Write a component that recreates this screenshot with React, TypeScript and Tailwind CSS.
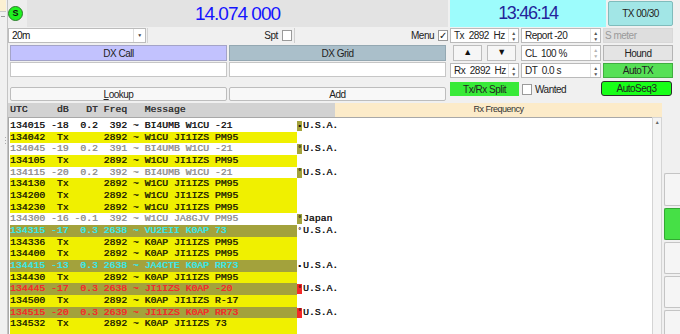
import React from "react";

type Kind = "tx" | "new" | "old" | "cq" | "me";

type Row = {
  text: string;
  kind: Kind;
  mark?: string;
  markBg?: string;
  country?: string;
};

const rows: Row[] = [
  { text: "134015 -18  0.2  392 ~ BI4UMB W1CU -21", kind: "new", mark: "•", markBg: "bg-[#a3a23c]", country: "U.S.A." },
  { text: "134042  Tx      2892 ~ W1CU JI1IZS PM95", kind: "tx" },
  { text: "134045 -19  0.2  391 ~ BI4UMB W1CU -21", kind: "old", mark: "°", markBg: "bg-[#a3a23c]", country: "U.S.A." },
  { text: "134105  Tx      2892 ~ W1CU JI1IZS PM95", kind: "tx" },
  { text: "134115 -20  0.2  392 ~ BI4UMB W1CU -21", kind: "old", mark: "°", markBg: "bg-[#a3a23c]", country: "U.S.A." },
  { text: "134130  Tx      2892 ~ W1CU JI1IZS PM95", kind: "tx" },
  { text: "134200  Tx      2892 ~ W1CU JI1IZS PM95", kind: "tx" },
  { text: "134230  Tx      2892 ~ W1CU JI1IZS PM95", kind: "tx" },
  { text: "134300 -16 -0.1  392 ~ W1CU JA8GJV PM95", kind: "old", mark: "°", markBg: "bg-[#a3a23c]", country: "Japan" },
  { text: "134315 -17  0.3 2638 ~ VU2EII K0AP 73", kind: "cq", mark: "°", country: "U.S.A." },
  { text: "134336  Tx      2892 ~ K0AP JI1IZS PM95", kind: "tx" },
  { text: "134400  Tx      2892 ~ K0AP JI1IZS PM95", kind: "tx" },
  { text: "134415 -13  0.3 2638 ~ JA4CTE K0AP RR73", kind: "cq", mark: "•", country: "U.S.A." },
  { text: "134430  Tx      2892 ~ K0AP JI1IZS PM95", kind: "tx" },
  { text: "134445 -17  0.3 2638 ~ JI1IZS K0AP -20", kind: "me", mark: "°", markBg: "bg-[#f42a2a]", country: "U.S.A." },
  { text: "134500  Tx      2892 ~ K0AP JI1IZS R-17", kind: "tx" },
  { text: "134515 -20  0.3 2639 ~ JI1IZS K0AP RR73", kind: "me", mark: "°", markBg: "bg-[#f42a2a]", country: "U.S.A." },
  { text: "134532  Tx      2892 ~ K0AP JI1IZS 73", kind: "tx" },
];

const rowStyle: Record<Kind, string> = {
  tx: "bg-[#f0f000] text-[#2a2a00]",
  new: "text-[#1c1c1c]",
  old: "text-[#929292]",
  cq: "bg-[#a3a23c] text-[#3ae6e6]",
  me: "bg-[#a3a23c] text-[#f42a2a]",
};

const ui = "font-['Liberation_Sans',Arial,sans-serif] tracking-[-0.5px]";
const mono =
  "font-['Liberation_Mono','Courier_New',monospace] tracking-normal [text-shadow:0.35px_0_0_currentColor]";

function SpinArrows({ dim }: { dim?: boolean }) {
  return (
    <div
      className={`flex h-full w-[10px] shrink-0 flex-col items-center justify-center border-l border-[#e4e4e4] text-[5px] leading-[6px] ${
        dim ? "text-[#b4b4b4]" : "text-[#555]"
      }`}
    >
      <span>▲</span>
      <span>▼</span>
    </div>
  );
}

function Spin({ children, dim }: { children: React.ReactNode; dim?: boolean }) {
  return (
    <div className="flex h-full items-center border border-[#bababa] bg-white">
      <div className="flex flex-1 items-center overflow-hidden whitespace-pre pl-[3px] text-[#222]">{children}</div>
      <SpinArrows dim={dim} />
    </div>
  );
}

function Check({ checked }: { checked?: boolean }) {
  return (
    <div className="flex h-[11px] w-[10px] shrink-0 items-center justify-center border border-[#9a9a9a] bg-white text-[10px] leading-none text-[#111]">
      {checked ? "✓" : ""}
    </div>
  );
}

export default function App() {
  return (
    <div className={`flex h-[334px] w-[680px] overflow-hidden bg-[#f0f0f0] text-[10px] ${ui}`}>
      {/* left splitter strip */}
      <div className="flex w-[8px] shrink-0 flex-col border-r border-[#c4c4c4]">
        <div className="h-[12px] w-[6px] border-b border-[#c8c8c8] bg-[#fbf0d2]" />
        <div className="ml-[1px] mt-[4px] h-[1px] w-[4px] bg-[#999]" />
        <div className="ml-[5px] mt-[120px] flex flex-col gap-[2px]">
          <span className="h-[1px] w-[1px] bg-[#aaa]" />
          <span className="h-[1px] w-[1px] bg-[#aaa]" />
          <span className="h-[1px] w-[1px] bg-[#aaa]" />
        </div>
      </div>

      <div className="flex h-full w-[672px] flex-col">
        {/* top controls */}
        <div className="flex h-[103px] shrink-0">
          {/* left block */}
          <div className="flex w-[440px] flex-col">
            <div className="flex h-[27px] shrink-0">
              <div className="w-[19px] bg-[#ededed] pt-[6px]">
                <div className="flex h-[15px] w-[15px] items-center justify-center rounded-full border border-[#2a7a2a] bg-[#1ff01f] text-[9px] font-bold tracking-normal text-[#111]">
                  S
                </div>
              </div>
              <div className="flex flex-1 items-center justify-center whitespace-pre bg-[#e3e3e3] pt-[1px] text-[19px] tracking-[-1px] text-[#1414ff]">
                14.074 000
              </div>
            </div>

            <div className="mt-[1px] flex h-[15px] shrink-0 items-center">
              <div className="flex h-full w-[138px] items-center border border-[#bcbcbc] bg-white">
                <span className="flex-1 pl-[3px] text-[#111]">20m</span>
                <span className="flex h-full w-[12px] items-center justify-center border-l border-[#dedede] text-[5px] text-[#444]">
                  ▼
                </span>
              </div>
              <div className="ml-[1px] h-full w-[1px] bg-[#d4d4d4]" />
              <span className="ml-auto mr-[4px] text-[#222]">Spt</span>
              <Check />
              <div className="ml-[2px] h-full w-[1px] bg-[#cfcfcf]" />
              <span className="ml-auto mr-[4px] text-[#222]">Menu</span>
              <Check checked />
            </div>

            <div className="mt-[2px] flex h-[16px] shrink-0 gap-[2px] pl-[2px]">
              <div className="flex w-[217px] items-center justify-center border border-[#a4a4c8] bg-[#c2c2fe] text-[#222]">
                DX Call
              </div>
              <div className="flex w-[217px] items-center justify-center border border-[#94a8b2] bg-[#aabfca] text-[#222]">
                DX Grid
              </div>
            </div>

            <div className="mt-[1px] flex h-[15px] shrink-0 gap-[2px] pl-[2px]">
              <div className="w-[217px] border border-[#c6c6c6] bg-white" />
              <div className="w-[217px] border border-[#c6c6c6] bg-white" />
            </div>

            <div className="mt-[10px] flex h-[14px] shrink-0 gap-[2px] pl-[2px]">
              <div className="flex w-[217px] items-center justify-center rounded-[2px] border border-[#bdbdbd] bg-[#f8f8f8] text-[#222]">
                <span className="underline">L</span>ookup
              </div>
              <div className="flex w-[217px] items-center justify-center rounded-[2px] border border-[#bdbdbd] bg-[#f8f8f8] text-[#222]">
                Add
              </div>
            </div>
          </div>

          {/* right block */}
          <div className="flex w-[232px] flex-col pl-[2px]">
            <div className="flex h-[27px] shrink-0">
              <div className="flex w-[156px] items-center justify-center bg-[#9dfcfc] text-[18px] tracking-[-1.3px] text-[#24249a]">
                13:46:14
              </div>
              <div className="ml-[2px] mt-[1px] flex h-[25px] w-[65px] items-center justify-center rounded-[2px] border border-[#7fbcbc] bg-[#a2e6e6] text-[#222]">
                TX 00/30
              </div>
            </div>

            <div className="mt-[1px] flex h-[15px] shrink-0">
              <div className="w-[69px]">
                <Spin>{"Tx  2892  Hz"}</Spin>
              </div>
              <div className="ml-[2px] w-[80px]">
                <Spin>Report -20</Spin>
              </div>
              <div className="ml-[2px] flex w-[70px] items-center border border-[#d8d8d8] bg-[#dedede] pl-[1px] text-[#9a9a9a]">
                S meter
              </div>
            </div>

            <div className="mt-[2px] flex h-[16px] shrink-0">
              <div className="flex w-[69px] gap-[5px] pl-[3px]">
                <div className="flex w-[29px] items-center justify-center border border-[#bdbdbd] bg-[#f6f6f6] text-[9px] text-[#111]">
                  ▲
                </div>
                <div className="flex w-[29px] items-center justify-center border border-[#bdbdbd] bg-[#f6f6f6] text-[9px] text-[#111]">
                  ▼
                </div>
              </div>
              <div className="ml-[2px] w-[80px]">
                <Spin dim>{"CL  100 %"}</Spin>
              </div>
              <div className="ml-[2px] flex w-[70px] items-center justify-center border border-[#b4b4b4] bg-[#e4e4e4] text-[#222]">
                Hound
              </div>
            </div>

            <div className="mt-[2px] flex h-[15px] shrink-0">
              <div className="w-[69px]">
                <Spin>{"Rx  2892  Hz"}</Spin>
              </div>
              <div className="ml-[2px] w-[80px]">
                <Spin>{"DT  0.0 s"}</Spin>
              </div>
              <div className="ml-[2px] flex w-[70px] items-center justify-center border border-[#3fae3f] bg-[#56e056] text-[#222]">
                AutoTX
              </div>
            </div>

            <div className="mt-[4px] flex h-[14px] shrink-0">
              <div className="flex w-[69px] items-center justify-center bg-[#38ea38] text-[#222]">
                Tx/Rx Split
              </div>
              <div className="ml-[3px] flex w-[78px] items-center gap-[3px]">
                <Check />
                <span className="text-[#222]">Wanted</span>
              </div>
              <div className="-mt-[1px] ml-[1px] flex h-[15px] w-[71px] items-center justify-center rounded-[3px] border border-[#2c2c2c] bg-[#18ff18] text-[#222]">
                AutoSeq3
              </div>
            </div>
          </div>
        </div>

        {/* column headers */}
        <div className="flex h-[14px] shrink-0">
          <div className={`flex w-[327px] items-center whitespace-pre bg-[#d2d2d2] pl-[2px] text-[9.75px] text-[#333] ${mono}`}>
            {"UTC     dB   DT Freq   Message"}
          </div>
          <div className="flex w-[327px] items-center justify-center bg-[#fcebc9] text-[9px] text-[#333]">
            Rx Frequency
          </div>
        </div>

        {/* decoded list */}
        <div className="flex min-h-0 flex-1">
          <div className={`w-[644px] overflow-hidden border-l border-t border-[#a8a8a8] bg-white pt-[2px] text-[9.75px] ${mono}`}>
            {rows.map((r, i) => (
              <div key={i} className="flex h-[11.68px] leading-[11.68px]">
                <div className={`ml-[1px] w-[287px] whitespace-pre ${rowStyle[r.kind]}`}>{r.text}</div>
                <div className="w-[6px]">
                  {r.mark && (
                    <div
                      className={`mt-[1px] flex h-[10px] w-[5px] items-center justify-center text-[7px] leading-none text-[#111] ${
                        r.markBg ?? ""
                      }`}
                    >
                      {r.mark}
                    </div>
                  )}
                </div>
                {r.country && <div className="text-[#1c1c1c]">{r.country}</div>}
              </div>
            ))}
            <div className="ml-[1px] h-[6px] w-[287px] bg-[#f0f000]" />
          </div>
          <div className="flex w-[10px] flex-col border-x border-t border-[#d4d4d4] bg-[#f4f4f4]">
            <div className="flex h-[10px] items-center justify-center text-[5px] text-[#666]">▲</div>
          </div>
          <div className="ml-[2px] flex flex-1 flex-col gap-[2px] pt-[56px]">
            <div className="h-[33px] shrink-0 rounded-l-[2px] border border-r-0 border-[#c4c4c4] bg-[#f5f5f5]" />
            <div className="h-[32px] shrink-0 rounded-l-[2px] border border-r-0 border-[#32a832] bg-[#46e046]" />
            <div className="h-[32px] shrink-0 rounded-l-[2px] border border-r-0 border-[#c4c4c4] bg-[#f5f5f5]" />
            <div className="h-[32px] shrink-0 rounded-l-[2px] border border-r-0 border-[#c4c4c4] bg-[#f5f5f5]" />
            <div className="h-[32px] shrink-0 rounded-l-[2px] border border-r-0 border-[#c4c4c4] bg-[#f5f5f5]" />
          </div>
        </div>
      </div>
    </div>
  );
}
